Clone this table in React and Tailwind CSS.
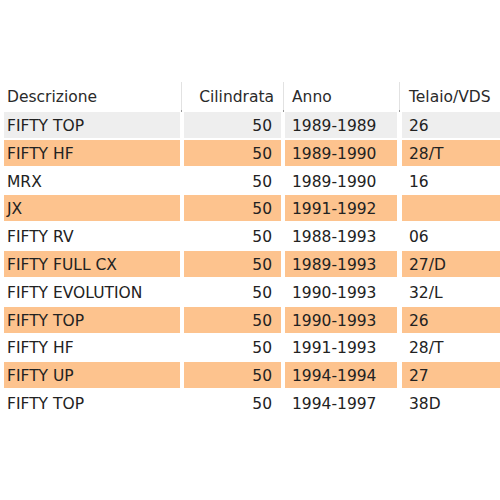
import React from "react";

const rows = [
  ["FIFTY TOP", "50", "1989-1989", "26"],
  ["FIFTY HF", "50", "1989-1990", "28/T"],
  ["MRX", "50", "1989-1990", "16"],
  ["JX", "50", "1991-1992", ""],
  ["FIFTY RV", "50", "1988-1993", "06"],
  ["FIFTY FULL CX", "50", "1989-1993", "27/D"],
  ["FIFTY EVOLUTION", "50", "1990-1993", "32/L"],
  ["FIFTY TOP", "50", "1990-1993", "26"],
  ["FIFTY HF", "50", "1991-1993", "28/T"],
  ["FIFTY UP", "50", "1994-1994", "27"],
  ["FIFTY TOP", "50", "1994-1997", "38D"],
];

function Sep({ cls }) {
  return (
    <div className={"relative w-px self-stretch bg-[#e2e2e2] " + cls}>
      <div className="absolute bottom-0 left-0 h-[2px] w-px bg-[#9a9a9a]" />
    </div>
  );
}

export default function App() {
  return (
    <div
      className="w-[500px] h-[500px] overflow-hidden bg-white text-[15.5px] text-[#222222]"
      style={{ fontFamily: "Tahoma, 'DejaVu Sans', Verdana, sans-serif" }}
    >
      <div className="pt-[82px] flex h-[112px] pl-[4px] text-[#2a2a2a]">
        <div className="w-[176px] pl-[3px] pt-[2px] flex items-center">Descrizione</div>
        <Sep cls="ml-[1px] mr-[2px]" />
        <div className="w-[97px] pr-[7px] pt-[2px] flex items-center justify-end">Cilindrata</div>
        <Sep cls="ml-[2px] mr-[1px]" />
        <div className="w-[112px] pl-[7px] pt-[2px] flex items-center">Anno</div>
        <Sep cls="ml-[2px] mr-[2px]" />
        <div className="flex-1 pl-[7px] pt-[2px] flex items-center whitespace-nowrap">Telaio/VDS</div>
      </div>
      <div className="flex flex-col gap-[1.8px] pl-[4px]">
        {rows.map((r, i) => {
          const bg =
            i === 0 ? "bg-[#eeeeee]" : i % 2 === 1 ? "bg-[#fdc38e]" : "bg-white";
          return (
            <div key={i} className="flex h-[26px] leading-[24px]">
              <div className={"w-[176px] pl-[3px] whitespace-nowrap pt-[2px] " + bg}>{r[0]}</div>
              <div className={"ml-[4px] w-[97px] pr-[9px] text-right pt-[2px] " + bg}>{r[1]}</div>
              <div className={"ml-[4px] w-[112px] pl-[7px] pt-[2px] " + bg}>{r[2]}</div>
              <div className={"ml-[5px] flex-1 pl-[7px] pt-[2px] " + bg}>{r[3]}</div>
            </div>
          );
        })}
      </div>
    </div>
  );
}
